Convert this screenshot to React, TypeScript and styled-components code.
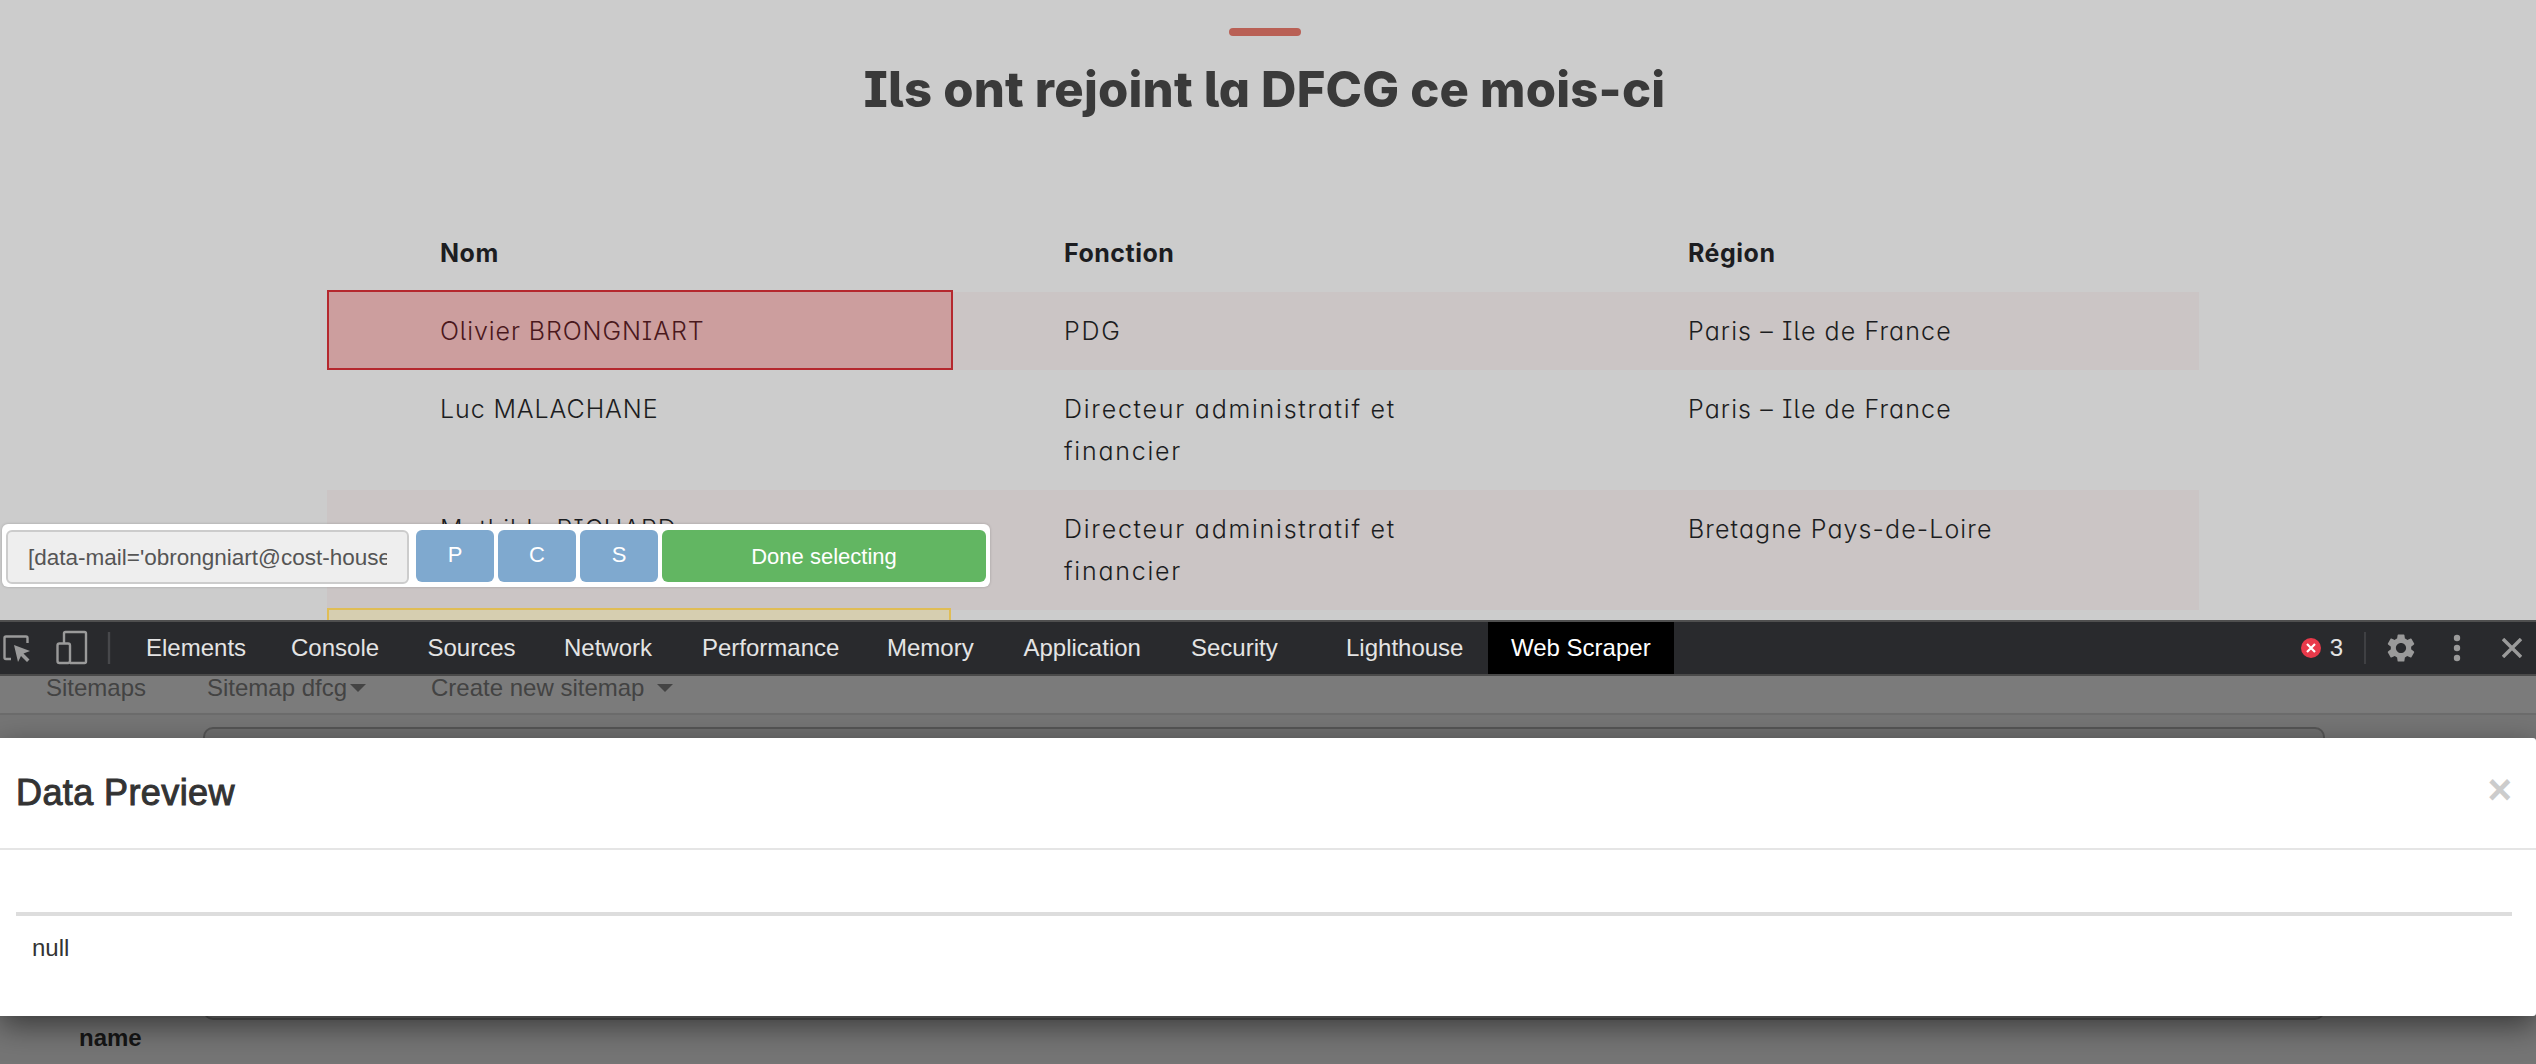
import styled, { createGlobalStyle } from "styled-components";
import { MdSettings } from "react-icons/md";

const GlobalStyle = createGlobalStyle`
  html, body {
    margin: 0;
    padding: 0;
    background: #cccccc;
    font-family: "Liberation Sans", Arial, sans-serif;
  }
`;

const Screen = styled.div`
  width: 2536px;
  height: 1064px;
  display: flex;
  flex-direction: column;
  overflow: hidden;
`;

/* ---- page under inspection ---- */

const Page = styled.section`
  position: relative;
  height: 620px;
  flex: none;
  overflow: hidden;
  background: #cccccc;
  padding: 28px 0 0 327px;
  box-sizing: border-box;
  font-family: Inter, "Liberation Sans", sans-serif;
  font-feature-settings: "cv08", "cv05", "cv11";
`;

const TitleBlock = styled.div`
  width: 1875px;
  display: flex;
  flex-direction: column;
  align-items: center;
`;

const TitleBar = styled.div`
  width: 72px;
  height: 8px;
  border-radius: 4px;
  background: #b96055;
`;

const Title = styled.h2`
  margin: 23px 0 0;
  font-size: 49px;
  line-height: 62px;
  font-weight: 800;
  letter-spacing: 0.2px;
  color: #3a3a3a;
`;

const Table = styled.table`
  width: 1872px;
  margin-top: 96px;
  border-collapse: collapse;
  table-layout: fixed;
  font-size: 25px;
  line-height: 42px;
  color: #1c1d21;
`;

const HeadCell = styled.th`
  padding: 15px 150px 18px 113px;
  text-align: left;
  font-weight: 700;
  letter-spacing: 0.5px;
`;

const Row = styled.tr<{ $striped?: boolean }>`
  background: ${(p) => (p.$striped ? "#cbc5c5" : "transparent")};
`;

const Cell = styled.td<{ $mark?: "selected" | "hover"; $tracking: number }>`
  position: relative;
  padding: 18px 100px 18px 113px;
  vertical-align: top;
  font-weight: 300;
  letter-spacing: ${(p) => p.$tracking}px;
  color: ${(p) => (p.$mark === "selected" ? "#4a181c" : "#1c1d21")};
  background: ${(p) =>
    p.$mark === "selected" ? "#cc9e9e" : p.$mark === "hover" ? "#d6ceb0" : "transparent"};

  &::after {
    content: ${(p) => (p.$mark ? '""' : "none")};
    position: absolute;
    inset: ${(p) => (p.$mark === "selected" ? "-2px -2px 0 0" : "-2px 0 0 0")};
    border: 2px solid ${(p) => (p.$mark === "selected" ? "#b5282e" : "#e0bd55")};
  }
`;

/* ---- selector toolbar of the scraper ---- */

const SelectorBar = styled.div`
  position: absolute;
  left: 2px;
  top: 524px;
  width: 988px;
  height: 63px;
  box-sizing: border-box;
  padding: 6px 4px 0 4px;
  display: flex;
  gap: 4px;
  background: #ffffff;
  border-radius: 6px;
  box-shadow: 0 0 3px rgba(0, 0, 0, 0.2);
  font-family: "Liberation Sans", Arial, sans-serif;
  font-feature-settings: normal;
`;

const SelectorInput = styled.input`
  width: 403px;
  height: 54px;
  margin-right: 3px;
  box-sizing: border-box;
  padding: 4px 20px 2px;
  border: 2px solid #cccccc;
  border-radius: 6px;
  background: #eeeeee;
  color: #555555;
  font-family: inherit;
  font-size: 22.500px;
  outline: none;
`;

const BarButton = styled.button<{ $done?: boolean }>`
  width: ${(p) => (p.$done ? "324px" : "78px")};
  height: 52px;
  padding: ${(p) => (p.$done ? "2px 0 0" : "0 0 2px")};
  border: 0;
  border-radius: 6px;
  background: ${(p) => (p.$done ? "#62b662" : "#7fa9cf")};
  color: #ffffff;
  font-family: inherit;
  font-size: 22px;
`;

/* ---- devtools ---- */

const Devtools = styled.div`
  flex: 1;
  position: relative;
  display: flex;
  flex-direction: column;
  min-height: 0;
`;

const TabBar = styled.div`
  height: 52px;
  flex: none;
  display: flex;
  align-items: stretch;
  background: #292a2d;
  border-top: 2px solid #4f4f4f;
  border-bottom: 2px solid #4a4a4a;
  color: #e4e4e4;
  font-size: 24px;
`;

const ToolIcons = styled.div`
  width: 122.500px;
  flex: none;
  display: flex;
  align-items: center;
`;

const ToolSvg = styled.svg`
  display: block;
  width: 122px;
  height: 52px;
`;

const Tab = styled.div<{ $active?: boolean; $width: number }>`
  width: ${(p) => p.$width}px;
  flex: none;
  box-sizing: border-box;
  display: flex;
  align-items: center;
  padding-left: 23.500px;
  background: ${(p) => (p.$active ? "#000000" : "transparent")};
  color: ${(p) => (p.$active ? "#ffffff" : "#e4e4e4")};
`;

const TabBarEnd = styled.div`
  margin-left: auto;
  display: flex;
  align-items: center;
  color: #9a9a9a;
`;

const ErrorCount = styled.div`
  display: flex;
  align-items: center;
  gap: 9px;
  color: #e4e4e4;
`;

const Separator = styled.div`
  width: 2px;
  height: 32px;
  margin: 0 18px 0 21px;
  background: #3f4043;
`;

const EndIcon = styled.div`
  display: flex;
  align-items: center;
  justify-content: center;
  width: 34px;
`;

const DotsIcon = styled(EndIcon)`
  margin-left: 22px;
`;

const CloseIcon = styled(EndIcon)`
  margin: 0 7px 0 21px;
`;

const Panel = styled.div`
  flex: 1;
  min-height: 0;
  display: flex;
  flex-direction: column;
  background: #7b7b7b;
  color: #434343;
  font-size: 24px;
`;

const PanelNav = styled.nav`
  height: 39px;
  flex: none;
  display: flex;
  box-sizing: border-box;
  padding-left: 46px;
  border-bottom: 2px solid #6c6c6c;
  line-height: 24px;
`;

const NavItem = styled.div<{ $width: number }>`
  width: ${(p) => p.$width}px;
  display: flex;
  gap: 3px;
  height: 24px;
  align-items: center;
`;

const Caret = styled.span<{ $offset?: number }>`
  width: 0;
  height: 0;
  margin-left: ${(p) => p.$offset ?? 0}px;
  border-left: 8px solid transparent;
  border-right: 8px solid transparent;
  border-top: 8px solid #444444;
`;

const PanelBody = styled.div`
  flex: 1;
  padding: 12px 211px 0 203px;
  background: #757575;
`;

const PanelBox = styled.div`
  height: 293px;
  box-sizing: border-box;
  border: 2px solid #555555;
  border-radius: 10px;
  background: #6e6e6e;
`;

const NameLabel = styled.div`
  position: absolute;
  left: 79px;
  top: 404px;
  font-size: 24px;
  font-weight: 700;
  line-height: 28px;
  color: #161616;
`;

/* ---- modal ---- */

const Modal = styled.div`
  position: absolute;
  left: 0;
  right: 0;
  top: 118px;
  height: 278px;
  background: #ffffff;
  border-radius: 0 3px 3px 0;
  box-shadow: 0 10px 30px rgba(0, 0, 0, 0.5);
  color: #333333;
`;

const ModalHeader = styled.div`
  height: 112px;
  box-sizing: border-box;
  padding: 0 24px 0 16px;
  display: flex;
  align-items: center;
  justify-content: space-between;
  border-bottom: 2px solid #e5e5e5;
`;

const ModalTitle = styled.h4`
  margin: 0;
  font-size: 36px;
  font-weight: 400;
  letter-spacing: 0.4px;
  -webkit-text-stroke: 1px #333333;
`;

const ModalClose = styled.span`
  margin-bottom: 6px;
  color: #cccccc;
  font-size: 42px;
  font-weight: 700;
  line-height: 1;
`;

const PreviewTable = styled.div`
  margin: 62px 24px 0 16px;
  border-top: 4px solid #dddddd;
  padding: 16px;
  font-size: 24px;
  line-height: 32px;
`;

const team = [
  { name: "Olivier BRONGNIART", role: "PDG", region: "Paris – Ile de France", mark: "selected" as const },
  { name: "Luc MALACHANE", role: "Directeur administratif et financier", region: "Paris – Ile de France" },
  { name: "Mathilde RICHARD", role: "Directeur administratif et financier", region: "Bretagne Pays-de-Loire" },
  { name: "\u00a0", role: "\u00a0", region: "\u00a0", mark: "hover" as const },
];

const tabs = [
  { label: "Elements", width: 145 },
  { label: "Console", width: 136.5 },
  { label: "Sources", width: 136.5 },
  { label: "Network", width: 138 },
  { label: "Performance", width: 185 },
  { label: "Memory", width: 136.5 },
  { label: "Application", width: 167.5 },
  { label: "Security", width: 155 },
  { label: "Lighthouse", width: 165 },
];

export default function App() {
  return (
    <Screen>
      <GlobalStyle />
      <Page>
        <TitleBlock>
          <TitleBar />
          <Title>Ils ont rejoint la DFCG ce mois-ci</Title>
        </TitleBlock>
        <Table>
          <thead>
            <tr>
              <HeadCell>Nom</HeadCell>
              <HeadCell>Fonction</HeadCell>
              <HeadCell>Région</HeadCell>
            </tr>
          </thead>
          <tbody>
            {team.map((m, i) => (
              <Row key={i} $striped={i % 2 === 0}>
                <Cell $mark={m.mark} $tracking={0.9}>
                  {m.name}
                </Cell>
                <Cell $tracking={1.75}>{m.role}</Cell>
                <Cell $tracking={1.1}>{m.region}</Cell>
              </Row>
            ))}
          </tbody>
        </Table>
        <SelectorBar>
          <SelectorInput readOnly value="[data-mail='obrongniart@cost-house.fr']" />
          <BarButton>P</BarButton>
          <BarButton>C</BarButton>
          <BarButton>S</BarButton>
          <BarButton $done>Done selecting</BarButton>
        </SelectorBar>
      </Page>

      <Devtools>
        <TabBar>
          <ToolIcons>
            <ToolSvg viewBox="0 0 122 52" fill="none" stroke="#9a9a9a" strokeWidth="2.4">
              <path d="M11 37H6a1.5 1.5 0 0 1-1.500-1.500V16a1.500 1.500 0 0 1 1.500-1.500h20a1.500 1.500 0 0 1 1.500 1.500v5" />
              <path d="M14 23l16 6-6.500 2.500 6 6-2.500 2.500-6-6L18 40z" fill="#9a9a9a" stroke="none" />
              <path d="M64 21v-9.500a1.500 1.500 0 0 1 1.500-1.500h19a1.500 1.500 0 0 1 1.500 1.500v28a1.500 1.500 0 0 1-1.500 1.500H70" />
              <rect x="57.500" y="21.500" width="12.500" height="19.500" rx="2" />
              <path d="M109 10v32" stroke="#47484b" />
            </ToolSvg>
          </ToolIcons>
          {tabs.map((t) => (
            <Tab key={t.label} $width={t.width}>
              {t.label}
            </Tab>
          ))}
          <Tab $active $width={186}>
            Web Scraper
          </Tab>
          <TabBarEnd>
            <ErrorCount>
              <svg width="20" height="20" viewBox="0 0 20 20">
                <circle cx="10" cy="10" r="10" fill="#e8394a" />
                <path d="M6 6l8 8M14 6l-8 8" stroke="#ffffff" strokeWidth="2.200" />
              </svg>
              3
            </ErrorCount>
            <Separator />
            <EndIcon>
              <MdSettings size={34} />
            </EndIcon>
            <DotsIcon>
              <svg width="8" height="28" viewBox="0 0 8 28" fill="#9a9a9a">
                <circle cx="4" cy="4" r="3.200" />
                <circle cx="4" cy="14" r="3.200" />
                <circle cx="4" cy="24" r="3.200" />
              </svg>
            </DotsIcon>
            <CloseIcon>
              <svg width="20" height="20" viewBox="0 0 20 20">
                <path d="M1 1l18 18M19 1L1 19" stroke="#9a9a9a" strokeWidth="3.400" />
              </svg>
            </CloseIcon>
          </TabBarEnd>
        </TabBar>
        <Panel>
          <PanelNav>
            <NavItem $width={161}>Sitemaps</NavItem>
            <NavItem $width={224}>
              Sitemap dfcg
              <Caret />
            </NavItem>
            <NavItem $width={260}>
              Create new sitemap
              <Caret $offset={10} />
            </NavItem>
          </PanelNav>
          <PanelBody>
            <PanelBox />
          </PanelBody>
        </Panel>
        <NameLabel>name</NameLabel>
        <Modal>
          <ModalHeader>
            <ModalTitle>Data Preview</ModalTitle>
            <ModalClose>×</ModalClose>
          </ModalHeader>
          <PreviewTable>null</PreviewTable>
        </Modal>
      </Devtools>
    </Screen>
  );
}
